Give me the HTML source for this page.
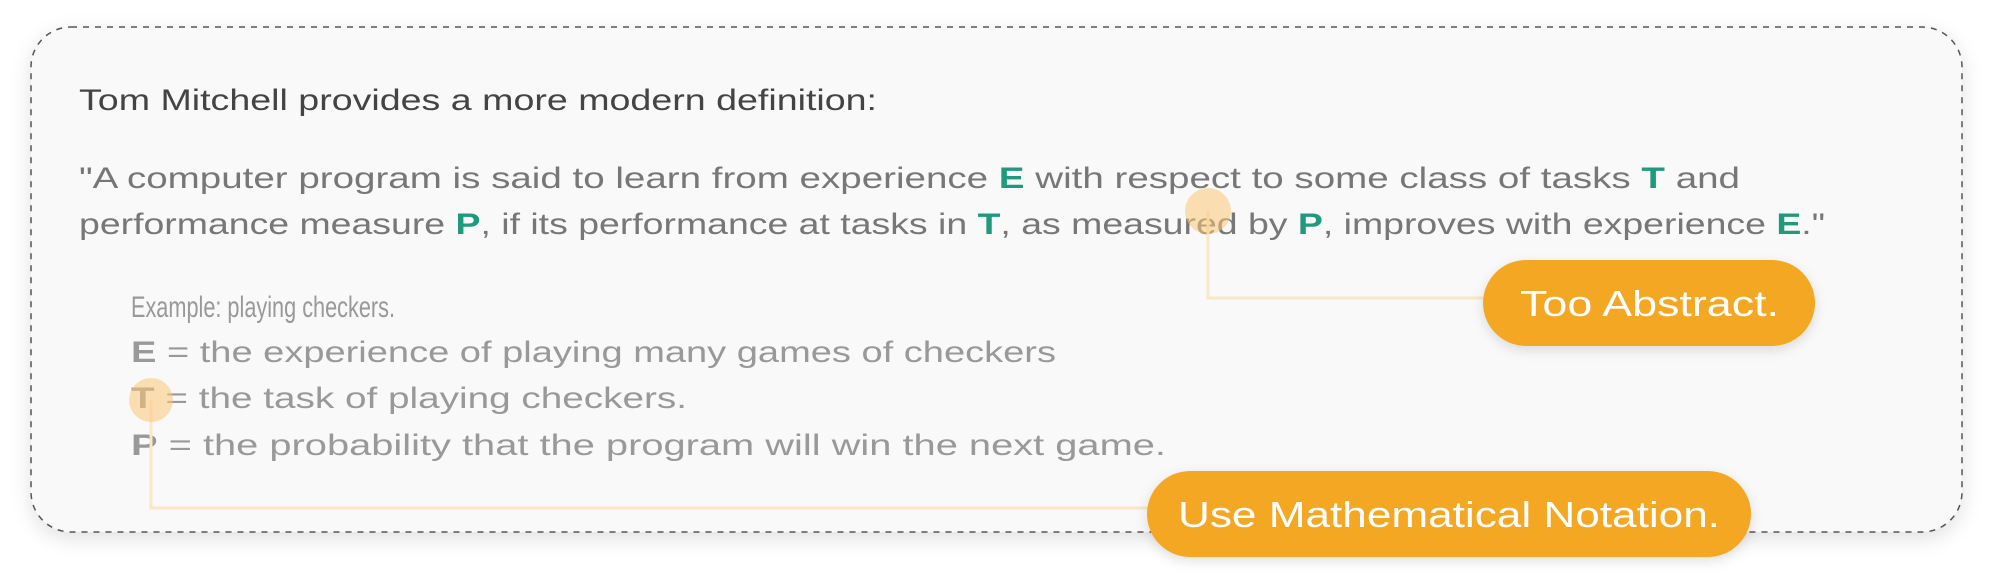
<!DOCTYPE html>
<html><head><meta charset="utf-8"><style>
html,body{margin:0;padding:0;background:#fff;width:1992px;height:584px;overflow:hidden}
</style></head><body>
<svg width="1992" height="584" viewBox="0 0 1992 584" xmlns="http://www.w3.org/2000/svg">
<defs>
<filter id="sh" x="-10%" y="-20%" width="120%" height="140%"><feDropShadow dx="0" dy="6" stdDeviation="10" flood-color="#000" flood-opacity="0.12"/></filter>
<filter id="sh2" x="-10%" y="-30%" width="120%" height="160%"><feDropShadow dx="0" dy="4" stdDeviation="6" flood-color="#000" flood-opacity="0.12"/></filter>
</defs>
<rect x="31" y="27" width="1931" height="505" rx="40" fill="#f9f9f9" filter="url(#sh)"/>
<rect x="31" y="27" width="1931" height="505" rx="40" fill="none" stroke="#555" stroke-width="1.5" stroke-dasharray="6,6"/>
<g font-family="'Liberation Sans', sans-serif" font-size="30">
<text x="79" y="110" fill="#444" textLength="798" lengthAdjust="spacingAndGlyphs">Tom Mitchell provides a more modern definition:</text>
<text x="79" y="188" fill="#777" textLength="1661" lengthAdjust="spacingAndGlyphs">"A computer program is said to learn from experience <tspan fill="#1f9a7d" font-weight="bold">E</tspan> with respect to some class of tasks <tspan fill="#1f9a7d" font-weight="bold">T</tspan> and</text>
<text x="79" y="234" fill="#777" textLength="1746" lengthAdjust="spacingAndGlyphs">performance measure <tspan fill="#1f9a7d" font-weight="bold">P</tspan>, if its performance at tasks in <tspan fill="#1f9a7d" font-weight="bold">T</tspan>, as measured by <tspan fill="#1f9a7d" font-weight="bold">P</tspan>, improves with experience <tspan fill="#1f9a7d" font-weight="bold">E</tspan>."</text>
<text x="131" y="317" fill="#999" textLength="264" lengthAdjust="spacingAndGlyphs">Example: playing checkers.</text>
<text x="131" y="362" fill="#999" textLength="925" lengthAdjust="spacingAndGlyphs"><tspan font-weight="bold">E</tspan> = the experience of playing many games of checkers</text>
<text x="131" y="408" fill="#999" textLength="556" lengthAdjust="spacingAndGlyphs"><tspan font-weight="bold">T</tspan> = the task of playing checkers.</text>
<text x="131" y="455" fill="#999" textLength="1035" lengthAdjust="spacingAndGlyphs"><tspan font-weight="bold">P</tspan> = the probability that the program will win the next game.</text>
</g>
<g stroke="#fbe6c6" stroke-width="3" fill="none">
<polyline points="1208,211 1208,298 1486,298"/>
<polyline points="151,400 151,508 1150,508"/>
</g>
<circle cx="1208" cy="211" r="23" fill="#fbc978" fill-opacity="0.55"/>
<circle cx="151" cy="400" r="22" fill="#fbc978" fill-opacity="0.55"/>
<rect x="1483" y="260" width="332" height="86" rx="43" fill="#f4a724" filter="url(#sh2)"/>
<rect x="1147" y="471" width="604" height="86" rx="43" fill="#f4a724" filter="url(#sh2)"/>
<g font-family="'Liberation Sans', sans-serif" font-size="36" fill="#fff">
<text x="1520" y="316" textLength="259" lengthAdjust="spacingAndGlyphs">Too Abstract.</text>
<text x="1178" y="527" textLength="542" lengthAdjust="spacingAndGlyphs">Use Mathematical Notation.</text>
</g>
</svg>
</body></html>
